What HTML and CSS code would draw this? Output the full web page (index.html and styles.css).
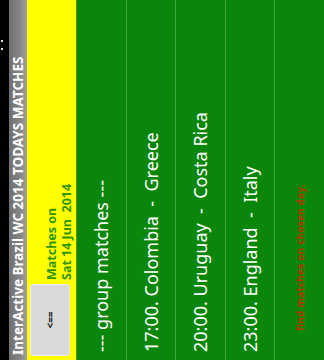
FILE: index.html
```html
<!DOCTYPE html>
<html lang="en">
<head>
  <meta charset="UTF-8">
  <meta name="viewport" content="width=device-width, initial-scale=1.0">
  <title>InterActive Brazil WC 2014</title>
  <link rel="stylesheet" href="styles.css">
</head>
<body>
  <div class="screen">
    <div class="status-bar"><span class="dot"></span><span class="dot"></span></div>
    <div class="title-bar">InterActive Brazil WC 2014 TODAYS MATCHES</div>

    <div class="day-panel">
      <button class="back-button" type="button">&lt;==</button>
      <div class="day-label">Matches on<br>Sat 14 Jun&nbsp; 2014</div>
    </div>

    <ul class="match-list">
      <li class="match-row">--- group matches ---</li>
      <li class="match-row">17:00. Colombia&nbsp; -&nbsp; Greece</li>
      <li class="match-row">20:00. Uruguay&nbsp; -&nbsp; Costa Rica</li>
      <li class="match-row">23:00. England&nbsp; -&nbsp; Italy</li>
      <li class="match-row hint">find matches on chosen day.</li>
    </ul>
  </div>
</body>
</html>
```

FILE: styles.css
```css
* {
  margin: 0;
  padding: 0;
  box-sizing: border-box;
}

html,
body {
  width: 324px;
  height: 360px;
  overflow: hidden;
  background: #000000;
}

body {
  font-family: "Noto Sans", "Open Sans", sans-serif;
}

/* the phone is held sideways, so the whole screen is turned */
.screen {
  width: 360px;
  height: 324px;
  display: flex;
  flex-direction: column;
  transform-origin: top left;
  transform: translateY(360px) rotate(-90deg);
  background: #0a860a;
}

.status-bar {
  height: 9px;
  background: #000000;
  display: flex;
  justify-content: flex-end;
  align-items: flex-start;
  gap: 6px;
  padding: 1px 40px 0 0;
}

.dot {
  width: 2px;
  height: 2px;
  background: #e0e0e0;
}

.title-bar {
  height: 18px;
  padding-left: 5px;
  background: linear-gradient(to bottom, #6f6f6f 0%, #858585 60%, #a2a2a2 100%);
  color: #ffffff;
  font-size: 13.5px;
  font-weight: bold;
  line-height: 18px;
  white-space: nowrap;
}

.day-panel {
  height: 50px;
  display: flex;
  align-items: flex-end;
  gap: 4px;
  padding: 3px 4px 2px 4px;
  background: #ffff00;
  border-bottom: 1px solid #5c8c00;
}

.back-button {
  align-self: flex-start;
  width: 72px;
  height: 40px;
  background: #dadada;
  border: 1px solid #f0f0f0;
  border-radius: 3px;
  color: #111111;
  font-family: "Noto Sans", sans-serif;
  font-size: 10px;
  font-weight: bold;
}

.day-label {
  color: #33960f;
  font-size: 12.5px;
  font-weight: bold;
  line-height: 15px;
}

.match-list {
  list-style: none;
  flex: 1;
  display: flex;
  flex-direction: column;
}

.match-row {
  flex: 1;
  display: flex;
  align-items: center;
  padding-left: 8px;
  color: #ffffff;
  font-size: 18px;
  white-space: nowrap;
  border-bottom: 1px solid #3ea63e;
}

.match-row:last-child {
  border-bottom: none;
}

.hint {
  padding-left: 29px;
  color: #b23a00;
  font-size: 10px;
  font-weight: bold;
  letter-spacing: 0.2px;
}
```
